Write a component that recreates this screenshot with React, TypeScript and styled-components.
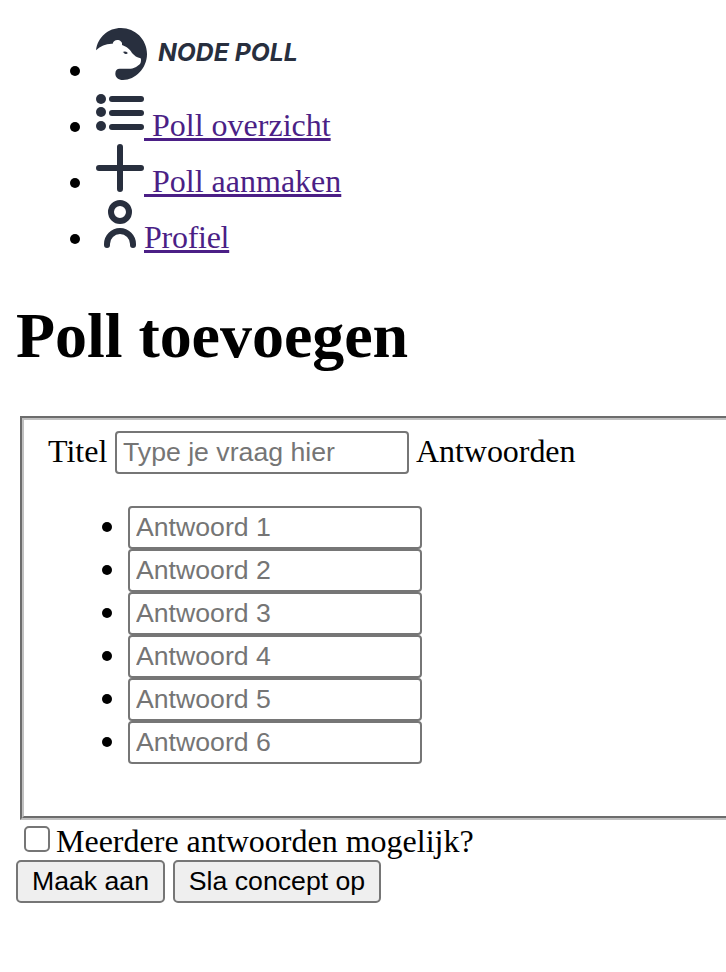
import React from "react";
import styled, { createGlobalStyle } from "styled-components";

const Global = createGlobalStyle`
  * { box-sizing: border-box; }
  html { overflow: hidden; }
  body {
    margin: 0;
    background: #fff;
    color: #000;
    font-family: "Liberation Serif", "Times New Roman", serif;
    font-size: 32px;
    line-height: 36px;
    overflow: hidden;
  }
`;

const Page = styled.main`
  height: 972px;
  padding: 28px 0 0 16px;
  overflow: hidden;
`;

const NavList = styled.ul`
  list-style: none;
  margin: 0;
  padding: 0 0 0 54px;
`;

const NavItem = styled.li<{ $first?: boolean }>`
  display: flex;
  align-items: flex-end;
  height: ${(p) => (p.$first ? 59 : 56)}px;
`;

const Bullet = styled.span<{ $drop: number; $gap: number }>`
  flex: none;
  width: 10px;
  height: 10px;
  border-radius: 50%;
  background: #000;
  margin: 0 ${(p) => p.$gap}px ${(p) => p.$drop}px 0;
`;

const Icon = styled.svg`
  flex: none;
  display: block;
  width: 48px;
  height: 48px;
  margin-bottom: 7px;
`;

const Bear = styled(Icon)`
  width: 51px;
  height: 52px;
`;

const Brand = styled.span`
  margin: 0 0 17px 11px;
  color: #282f3e;
  font: italic 700 24.7px/36px Inter, sans-serif;
  white-space: nowrap;
`;

const NavLink = styled.a<{ $tight?: boolean }>`
  color: #4b1f86;
  white-space: pre;
  letter-spacing: ${(p) => (p.$tight ? "-0.27px" : "normal")};
  text-decoration: underline;
  text-decoration-thickness: 3px;
  text-underline-offset: 2px;
  text-decoration-skip-ink: none;
`;

const Title = styled.h1`
  margin: 44px 0 43px;
  font-size: 64px;
  line-height: 74px;
  font-weight: 700;
  letter-spacing: -0.05px;
`;

const Fieldset = styled.fieldset`
  width: 760px;
  height: 404px;
  margin: 0 0 0 4px;
  padding: 11px 24px 0;
  border: 4px groove #c0c0c0;
`;

const QuestionRow = styled.div`
  display: flex;
  align-items: center;
  height: 43px;
`;

const Label = styled.label`
  width: 67px;
  padding-bottom: 4px;
  white-space: nowrap;
`;

const AnswersLabel = styled.span`
  margin-left: 7px;
  padding-bottom: 4px;
  letter-spacing: -0.05px;
`;

const TextInput = styled.input`
  display: block;
  width: 294px;
  height: 43px;
  margin: 0;
  padding: 2px 6px;
  border: 2px solid #767676;
  border-radius: 4px;
  background: #fff;
  font: 26.67px "Liberation Sans", Arial, sans-serif;
  &::placeholder { color: #757575; opacity: 1; }
`;

const AnswerList = styled.ul`
  list-style: none;
  margin: 32px 0 0;
  padding: 0 0 0 54px;
`;

const AnswerItem = styled.li`
  display: flex;
  align-items: flex-end;
  height: 43px;
`;

const CheckRow = styled.label`
  display: flex;
  align-items: center;
  height: 40px;
  padding: 0 0 2px 8px;
  gap: 6px;
`;

const Checkbox = styled.input`
  appearance: none;
  width: 26px;
  height: 26px;
  margin: 0;
  border: 2px solid #767676;
  border-radius: 5px;
  background: #fff;
`;

const CheckText = styled.span`
  padding-top: 3px;
`;

const Actions = styled.div`
  display: flex;
  gap: 8px;
`;

const Button = styled.button<{ $w: number }>`
  width: ${(p) => p.$w}px;
  height: 43px;
  margin: 0;
  padding: 0 0 1px;
  border: 2px solid #767676;
  border-radius: 5px;
  background: #efefef;
  color: #000;
  font: 26.67px "Liberation Sans", Arial, sans-serif;
  white-space: nowrap;
`;

const INK = "#282f3e";
const answers = [1, 2, 3, 4, 5, 6];

export default function App() {
  return (
    <>
      <Global />
      <Page>
        <NavList>
          <NavItem $first>
            <Bullet $drop={11} $gap={16} />
            <Bear viewBox="108 24 153 156" fill={INK}>
              <path
                fillRule="evenodd"
                d="M108 91C113 51 145 24 183 24C226 24 261 59 261 102C261 145 226 180 189 180C175 180 166 172 166 161C166 151 171 146 179 146L212 146C226 145 232 138 240 132C243 128 244 119 242 115C231 113 223 107 216 99C209 87 201 81 186 75C188 66 180 60 172 60C165 60 160 64 158 71C139 70 122 77 108 91Z"
              />
              <path d="M188 96Q196 92 203 98Q204 101 199 102Q193 103 192 98Z" />
            </Bear>
            <Brand>NODE POLL</Brand>
          </NavItem>
          <NavItem>
            <Bullet $drop={11} $gap={16} />
            <Icon viewBox="0 0 48 48" fill={INK}>
              <circle cx="5" cy="11" r="5" />
              <circle cx="5" cy="24" r="5" />
              <circle cx="5" cy="38" r="5" />
              <rect x="13" y="8" width="35" height="6" rx="3" />
              <rect x="13" y="22" width="35" height="6" rx="3" />
              <rect x="13" y="36" width="35" height="6" rx="3" />
            </Icon>
            <NavLink> Poll overzicht</NavLink>
          </NavItem>
          <NavItem>
            <Bullet $drop={11} $gap={16} />
            <Icon viewBox="0 0 48 48" stroke={INK} strokeWidth="6" strokeLinecap="round">
              <path d="M24 3V45M3 24H45" />
            </Icon>
            <NavLink> Poll aanmaken</NavLink>
          </NavItem>
          <NavItem>
            <Bullet $drop={11} $gap={16} />
            <Icon viewBox="0 0 48 48" fill="none" stroke={INK} strokeWidth="6" strokeLinecap="round">
              <circle cx="24" cy="12" r="9" />
              <path d="M11 45V44A13 13 0 0 1 37 44V45" />
            </Icon>
            <NavLink $tight>Profiel</NavLink>
          </NavItem>
        </NavList>

        <Title>Poll toevoegen</Title>

        <form>
          <Fieldset>
            <QuestionRow>
              <Label htmlFor="title">Titel</Label>
              <TextInput id="title" placeholder="Type je vraag hier" />
              <AnswersLabel>Antwoorden</AnswersLabel>
            </QuestionRow>
            <AnswerList>
              {answers.map((n) => (
                <AnswerItem key={n}>
                  <Bullet $drop={17} $gap={16} />
                  <TextInput placeholder={`Antwoord ${n}`} />
                </AnswerItem>
              ))}
            </AnswerList>
          </Fieldset>
          <CheckRow>
            <Checkbox type="checkbox" />
            <CheckText>Meerdere antwoorden mogelijk?</CheckText>
          </CheckRow>
          <Actions>
            <Button type="button" $w={149}>Maak aan</Button>
            <Button type="button" $w={208}>Sla concept op</Button>
          </Actions>
        </form>
      </Page>
    </>
  );
}
